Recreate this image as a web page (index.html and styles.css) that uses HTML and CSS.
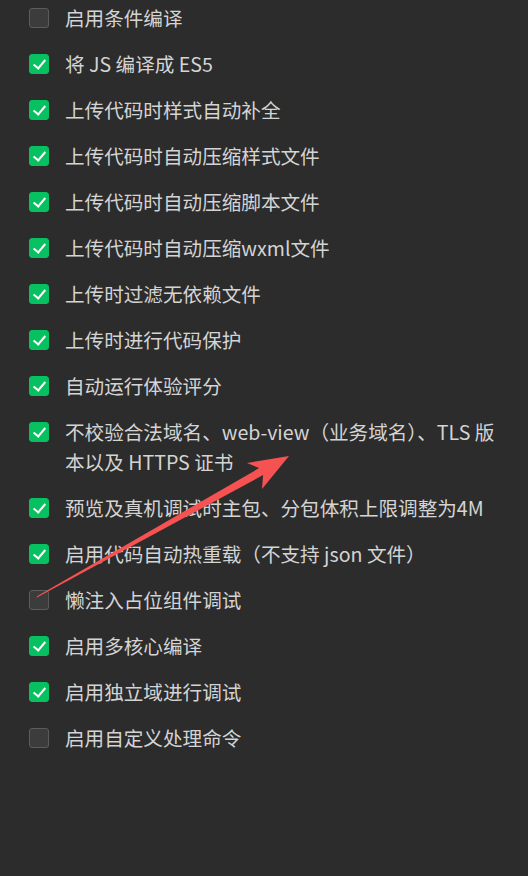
FILE: index.html
```html
<!DOCTYPE html>
<html>
   <head>
      <title>项目设置</title>
      <meta name="viewport" content="width=device-width, initial-scale=1">
      <link rel="stylesheet" href="styles.css">
   </head>
   <body>
      <div class="settings">
         <label class="option"><span class="box"></span><span class="label">启用条件编译</span></label>
         <label class="option"><span class="box checked"></span><span class="label">将 JS 编译成 ES5</span></label>
         <label class="option"><span class="box checked"></span><span class="label">上传代码时样式自动补全</span></label>
         <label class="option"><span class="box checked"></span><span class="label">上传代码时自动压缩样式文件</span></label>
         <label class="option"><span class="box checked"></span><span class="label">上传代码时自动压缩脚本文件</span></label>
         <label class="option"><span class="box checked"></span><span class="label">上传代码时自动压缩wxml文件</span></label>
         <label class="option"><span class="box checked"></span><span class="label">上传时过滤无依赖文件</span></label>
         <label class="option"><span class="box checked"></span><span class="label">上传时进行代码保护</span></label>
         <label class="option"><span class="box checked"></span><span class="label">自动运行体验评分</span></label>
         <label class="option"><span class="box checked"></span><span class="label">不校验合法域名、web-view（业务域名）、TLS 版本以及 HTTPS 证书</span></label>
         <label class="option"><span class="box checked"></span><span class="label">预览及真机调试时主包、分包体积上限调整为4M</span></label>
         <label class="option"><span class="box checked"></span><span class="label">启用代码自动热重载（不支持 json 文件）</span></label>
         <label class="option"><span class="box"></span><span class="label">懒注入占位组件调试</span></label>
         <label class="option"><span class="box checked"></span><span class="label">启用多核心编译</span></label>
         <label class="option"><span class="box checked"></span><span class="label">启用独立域进行调试</span></label>
         <label class="option"><span class="box"></span><span class="label">启用自定义处理命令</span></label>
      </div>

      <svg class="arrow" width="528" height="876" viewBox="0 0 528 876">
         <polygon points="36,598 37.5,596 259.1,468.1 247,463 289,456 262,489 263.1,475.1" fill="#f65252"/>
      </svg>
   </body>
</html>
```

FILE: styles.css
```css
body, html {
   margin: 0;
   height: 100%;
   background-color: #2c2c2c;
   font-family: "Noto Sans CJK SC", sans-serif;
   overflow: hidden;
   position: relative;
}

.settings {
   display: flex;
   flex-direction: column;
   margin-top: -5px;
   padding: 0 20px 0 29px;
}

.option {
   display: flex;
   align-items: flex-start;
   gap: 16px;
   padding: 8px 0;
   font-size: 19.6px;
   line-height: 30px;
   color: #d4d4d4;
}

.box {
   flex: none;
   width: 18px;
   height: 18px;
   margin-top: 5px;
   border: 1px solid #5c5c5c;
   border-radius: 3px;
   background-color: #3c3c3c;
   position: relative;
}

.box.checked {
   border-color: #07c160;
   background-color: #07c160;
}

.box.checked::after {
   content: "";
   position: absolute;
   left: 6px;
   top: 2px;
   width: 5px;
   height: 10px;
   border: solid #ffffff;
   border-width: 0 2px 2px 0;
   transform: rotate(40deg);
}

.arrow {
   position: absolute;
   top: 0;
   left: 0;
   pointer-events: none;
}
```
